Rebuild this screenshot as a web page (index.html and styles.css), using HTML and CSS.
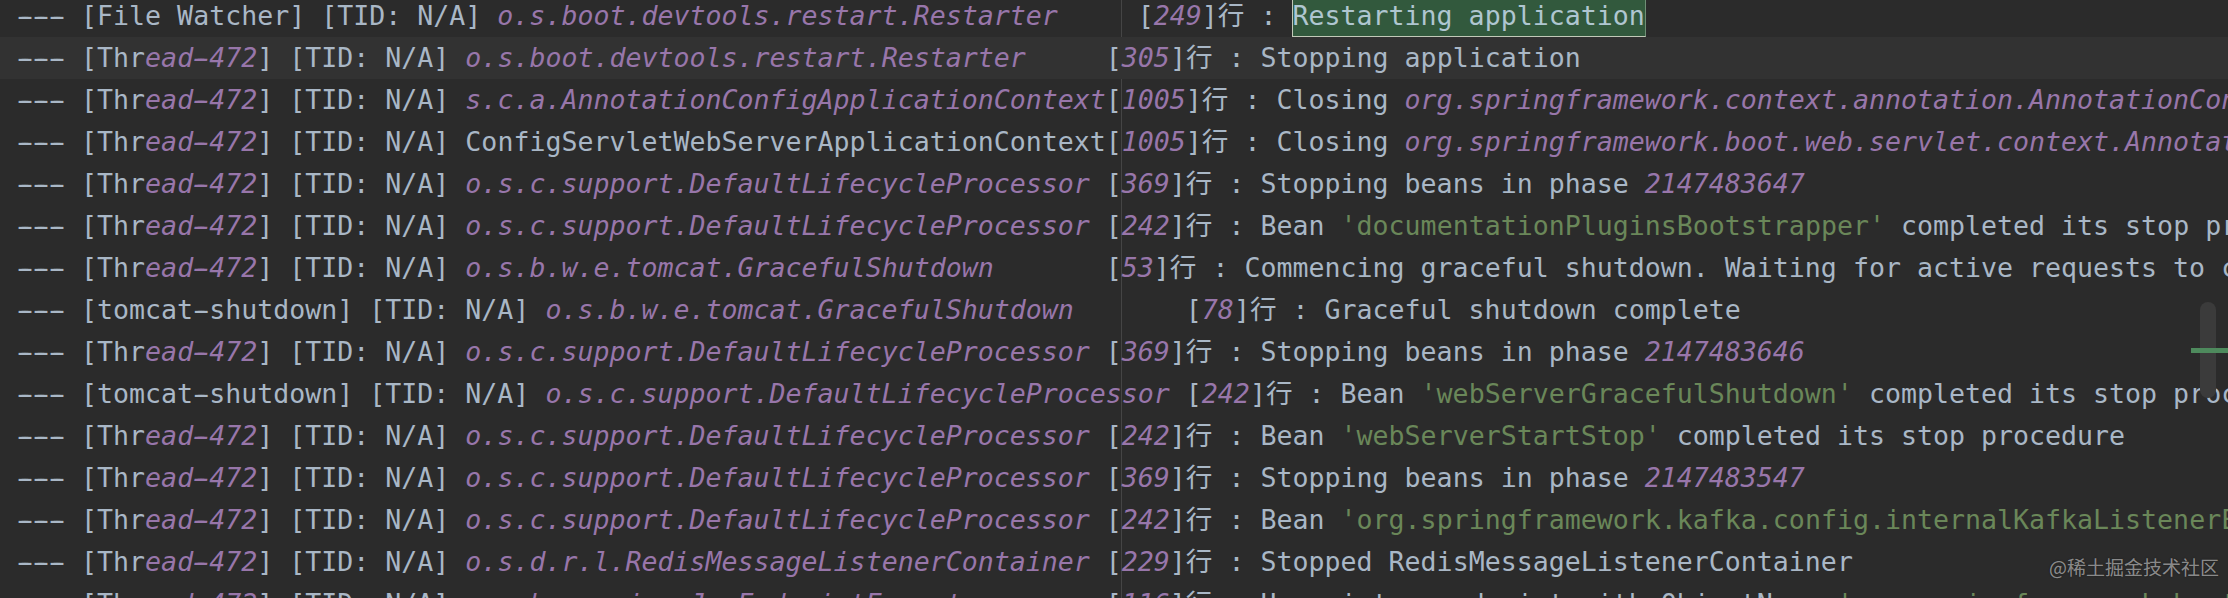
FILE: index.html
```html
<!DOCTYPE html>
<html lang="zh">
<head>
<meta charset="utf-8">
<title>Console</title>
<link rel="stylesheet" href="styles.css">
</head>
<body>
<div class="console">
  <div class="guide"></div>
  <div class="lines">
    <div class="line"><span class="d">---</span> [File Watcher] [TID: N/A] <span class="p">o.s.boot.devtools.restart.Restarter</span>     [<span class="p">249</span>]行 : <span class="hit">Restarting application</span></div>
    <div class="line current"><span class="d">---</span> [Thr<span class="p">ead<span class="d">-</span>472</span>] [TID: N/A] <span class="p">o.s.boot.devtools.restart.Restarter</span>     [<span class="p">305</span>]行 : Stopping application</div>
    <div class="line"><span class="d">---</span> [Thr<span class="p">ead<span class="d">-</span>472</span>] [TID: N/A] <span class="p">s.c.a.AnnotationConfigApplicationContext</span>[<span class="p">1005</span>]行 : Closing <span class="p">org.springframework.context.annotation.AnnotationConfigApplicationContext@5f2a1b7c</span></div>
    <div class="line"><span class="d">---</span> [Thr<span class="p">ead<span class="d">-</span>472</span>] [TID: N/A] ConfigServletWebServerApplicationContext[<span class="p">1005</span>]行 : Closing <span class="p">org.springframework.boot.web.servlet.context.AnnotationConfigServletWebServerApplicationContext@3c9e4d21</span></div>
    <div class="line"><span class="d">---</span> [Thr<span class="p">ead<span class="d">-</span>472</span>] [TID: N/A] <span class="p">o.s.c.support.DefaultLifecycleProcessor</span> [<span class="p">369</span>]行 : Stopping beans in phase <span class="p">2147483647</span></div>
    <div class="line"><span class="d">---</span> [Thr<span class="p">ead<span class="d">-</span>472</span>] [TID: N/A] <span class="p">o.s.c.support.DefaultLifecycleProcessor</span> [<span class="p">242</span>]行 : Bean <span class="g">'documentationPluginsBootstrapper'</span> completed its stop procedure</div>
    <div class="line"><span class="d">---</span> [Thr<span class="p">ead<span class="d">-</span>472</span>] [TID: N/A] <span class="p">o.s.b.w.e.tomcat.GracefulShutdown</span>       [<span class="p">53</span>]行 : Commencing graceful shutdown. Waiting for active requests to complete</div>
    <div class="line"><span class="d">---</span> [tomcat<span class="d">-</span>shutdown] [TID: N/A] <span class="p">o.s.b.w.e.tomcat.GracefulShutdown</span>       [<span class="p">78</span>]行 : Graceful shutdown complete</div>
    <div class="line"><span class="d">---</span> [Thr<span class="p">ead<span class="d">-</span>472</span>] [TID: N/A] <span class="p">o.s.c.support.DefaultLifecycleProcessor</span> [<span class="p">369</span>]行 : Stopping beans in phase <span class="p">2147483646</span></div>
    <div class="line"><span class="d">---</span> [tomcat<span class="d">-</span>shutdown] [TID: N/A] <span class="p">o.s.c.support.DefaultLifecycleProcessor</span> [<span class="p">242</span>]行 : Bean <span class="g">'webServerGracefulShutdown'</span> completed its stop procedure</div>
    <div class="line"><span class="d">---</span> [Thr<span class="p">ead<span class="d">-</span>472</span>] [TID: N/A] <span class="p">o.s.c.support.DefaultLifecycleProcessor</span> [<span class="p">242</span>]行 : Bean <span class="g">'webServerStartStop'</span> completed its stop procedure</div>
    <div class="line"><span class="d">---</span> [Thr<span class="p">ead<span class="d">-</span>472</span>] [TID: N/A] <span class="p">o.s.c.support.DefaultLifecycleProcessor</span> [<span class="p">369</span>]行 : Stopping beans in phase <span class="p">2147483547</span></div>
    <div class="line"><span class="d">---</span> [Thr<span class="p">ead<span class="d">-</span>472</span>] [TID: N/A] <span class="p">o.s.c.support.DefaultLifecycleProcessor</span> [<span class="p">242</span>]行 : Bean <span class="g">'org.springframework.kafka.config.internalKafkaListenerEndpointRegistry'</span> completed its stop procedure</div>
    <div class="line"><span class="d">---</span> [Thr<span class="p">ead<span class="d">-</span>472</span>] [TID: N/A] <span class="p">o.s.d.r.l.RedisMessageListenerContainer</span> [<span class="p">229</span>]行 : Stopped RedisMessageListenerContainer</div>
    <div class="line"><span class="d">---</span> [Thr<span class="p">ead<span class="d">-</span>472</span>] [TID: N/A] <span class="p">o.s.b.a.e.jmx.JmxEndpointExporter</span>       [<span class="p">116</span>]行 : Unregister endpoint with ObjectName <span class="g">'org.springframework.boot:type=Endpoint,name=Health'</span> from the JMX domain</div>
  </div>
  <div class="scrollbar">
    <div class="thumb"></div>
    <div class="mark"></div>
  </div>
  <div class="watermark">@稀土掘金技术社区</div>
</div>
</body>
</html>
```

FILE: styles.css
```css
html, body {
  margin: 0;
  padding: 0;
  background: #2b2b2b;
  overflow: hidden;
}

.console {
  position: relative;
  width: 2228px;
  height: 598px;
  overflow: hidden;
  background: #2b2b2b;
  font-family: "DejaVu Sans Mono", "Noto Sans CJK SC", monospace;
  font-size: 26.6px;
  color: #a9b7c6;
}

.guide {
  position: absolute;
  left: 1121px;
  top: 0;
  bottom: 0;
  width: 1px;
  background: #454545;
}

.lines {
  position: relative;
  margin-top: -5px;
}

.line {
  white-space: pre;
  height: 42px;
  line-height: 42px;
  padding-left: 17px;
}

.line.current {
  background: #323232;
}

.d {
  text-shadow: 3px 0 currentColor, -3px 0 currentColor;
}

.p {
  color: #9876aa;
  font-style: italic;
}

.g {
  color: #6a8759;
}

.hit {
  display: inline-block;
  vertical-align: top;
  box-sizing: border-box;
  height: 42px;
  line-height: 40px;
  margin-left: -1px;
  background: #32593d;
  border: 1px solid #c2c9b8;
  border-right-color: #6f8f76;
  color: #afc6d0;
}

.scrollbar {
  position: absolute;
  right: 0;
  top: 0;
  bottom: 0;
  width: 38px;
}

.thumb {
  position: absolute;
  left: 10px;
  top: 302px;
  width: 16px;
  height: 96px;
  border-radius: 8px;
  background: #3b3b3b;
}

.mark {
  position: absolute;
  left: 1px;
  right: 0;
  top: 348px;
  height: 5px;
  background: #4e8a5d;
}

.watermark {
  position: absolute;
  right: 9px;
  top: 553px;
  font-family: "Noto Sans CJK SC", sans-serif;
  font-size: 19px;
  line-height: 28px;
  color: rgba(210, 210, 210, 0.62);
  text-shadow: 0 0 2px rgba(0, 0, 0, 0.4);
}
```
